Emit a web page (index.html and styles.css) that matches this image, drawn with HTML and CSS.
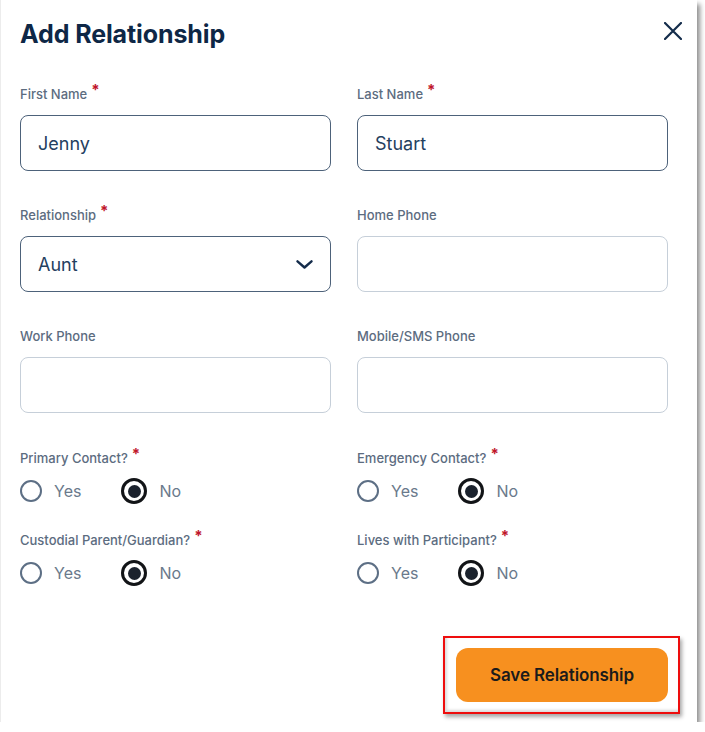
FILE: index.html
```html
<!DOCTYPE html>
<html lang="en">
<head>
<meta charset="utf-8">
<title>Add Relationship</title>
<link rel="stylesheet" href="styles.css">
</head>
<body>
<div class="panel">
  <header class="head">
    <h1 class="title">Add Relationship</h1>
    <button class="close" type="button" aria-label="Close">
      <svg width="18" height="18" viewBox="0 0 18 18"><path d="M1 1 L17 17 M17 1 L1 17" stroke="#142c4b" stroke-width="2.2" stroke-linecap="round" fill="none"/></svg>
    </button>
  </header>

  <div class="grid text-grid">
    <div class="field">
      <div class="lbl">First Name<span class="req">*</span></div>
      <div class="input filled">Jenny</div>
    </div>
    <div class="field">
      <div class="lbl">Last Name<span class="req">*</span></div>
      <div class="input filled">Stuart</div>
    </div>
    <div class="field">
      <div class="lbl">Relationship<span class="req">*</span></div>
      <div class="input filled select">Aunt
        <svg class="chev" width="17" height="9" viewBox="0 0 17 9"><path d="M1.5 1.3 L8.5 7.5 L15.5 1.3" stroke="#142c4b" stroke-width="2.4" stroke-linecap="round" stroke-linejoin="round" fill="none"/></svg>
      </div>
    </div>
    <div class="field">
      <div class="lbl">Home Phone</div>
      <div class="input"></div>
    </div>
    <div class="field">
      <div class="lbl">Work Phone</div>
      <div class="input"></div>
    </div>
    <div class="field">
      <div class="lbl">Mobile/SMS Phone</div>
      <div class="input"></div>
    </div>
  </div>

  <div class="grid radio-grid">
    <div class="field">
      <div class="lbl">Primary Contact?<span class="req">*</span></div>
      <div class="radios">
        <span class="opt"><span class="dot"></span>Yes</span>
        <span class="opt"><span class="dot on"></span>No</span>
      </div>
    </div>
    <div class="field">
      <div class="lbl">Emergency Contact?<span class="req">*</span></div>
      <div class="radios">
        <span class="opt"><span class="dot"></span>Yes</span>
        <span class="opt"><span class="dot on"></span>No</span>
      </div>
    </div>
    <div class="field">
      <div class="lbl">Custodial Parent/Guardian?<span class="req">*</span></div>
      <div class="radios">
        <span class="opt"><span class="dot"></span>Yes</span>
        <span class="opt"><span class="dot on"></span>No</span>
      </div>
    </div>
    <div class="field">
      <div class="lbl">Lives with Participant?<span class="req">*</span></div>
      <div class="radios">
        <span class="opt"><span class="dot"></span>Yes</span>
        <span class="opt"><span class="dot on"></span>No</span>
      </div>
    </div>
  </div>

  <div class="foot">
    <div class="mark">
      <button class="save" type="button">Save Relationship</button>
    </div>
  </div>
</div>
</body>
</html>
```
FILE: styles.css
```css
* { box-sizing: border-box; }
html, body { margin: 0; padding: 0; background: #ffffff; }
body { font-family: Inter, "Noto Sans", sans-serif; }

.panel {
  width: 697px;
  height: 722px;
  background: #fff;
  border-left: 1px solid #ececec;
  box-shadow: 3px 4px 5px rgba(0,0,0,0.45);
  display: flex;
  flex-direction: column;
}

.head {
  display: flex;
  justify-content: space-between;
  align-items: flex-start;
  padding: 18px 15px 0 19px;
}
.title {
  margin: 0;
  font-size: 25px;
  line-height: 32px;
  font-weight: 700;
  color: #0e2746;
  letter-spacing: -0.1px;
}
.close {
  margin-top: 4px;
  width: 18px;
  height: 18px;
  padding: 0;
  border: 0;
  background: none;
  display: flex;
}

.grid {
  display: grid;
  grid-template-columns: 311px 311px;
  column-gap: 26px;
  padding: 0 29px 0 19px;
}
.text-grid { margin-top: 36px; row-gap: 36px; }
.radio-grid { margin-top: 37px; row-gap: 29px; }

.field { display: flex; flex-direction: column; gap: 13px; }

.lbl {
  font-size: 13px;
  line-height: 16px;
  font-weight: 500;
  color: #5c6c7f;
  white-space: nowrap;
}
.req {
  color: #c0152a;
  font-size: 15px;
  font-weight: 700;
  margin-left: 4px;
  vertical-align: 4px;
  line-height: 0;
}

.input {
  height: 56px;
  border: 1px solid #c6cfd9;
  border-radius: 8px;
  padding: 0 17px;
  display: flex;
  align-items: center;
  font-size: 18px;
  color: #24405f;
}
.input.filled { border-color: #4d627a; }
.select { justify-content: space-between; }
.chev { display: block; }

.radios {
  display: flex;
  align-items: center;
  gap: 40px;
  height: 24px;
}
.opt {
  display: inline-flex;
  align-items: center;
  gap: 12px;
  font-size: 16px;
  color: #6a798b;
}
.dot {
  width: 22px;
  height: 22px;
  border: 2px solid #5d6f85;
  border-radius: 50%;
  display: flex;
  align-items: center;
  justify-content: center;
}
.dot.on {
  width: 26px;
  height: 26px;
  border: 3px solid #121417;
}
.dot.on::after {
  content: "";
  width: 13px;
  height: 13px;
  border-radius: 50%;
  background: #1b222d;
}

.foot {
  display: flex;
  justify-content: flex-end;
  margin-top: 51px;
  padding-right: 17px;
}
.mark {
  border: 2px solid #ee0d0d;
  padding: 10px 10px 10px 11px;
  box-shadow: 2px 3px 4px rgba(0,0,0,0.35), inset 2px -2px 3px rgba(0,0,0,0.15);
}
.save {
  width: 212px;
  height: 54px;
  border: 0;
  border-radius: 12px;
  background: #f7901f;
  font-family: Inter, "Noto Sans", sans-serif;
  font-size: 17px;
  font-weight: 600;
  color: #1b1b1b;
  padding: 0;
  letter-spacing: -0.1px;
}
```
